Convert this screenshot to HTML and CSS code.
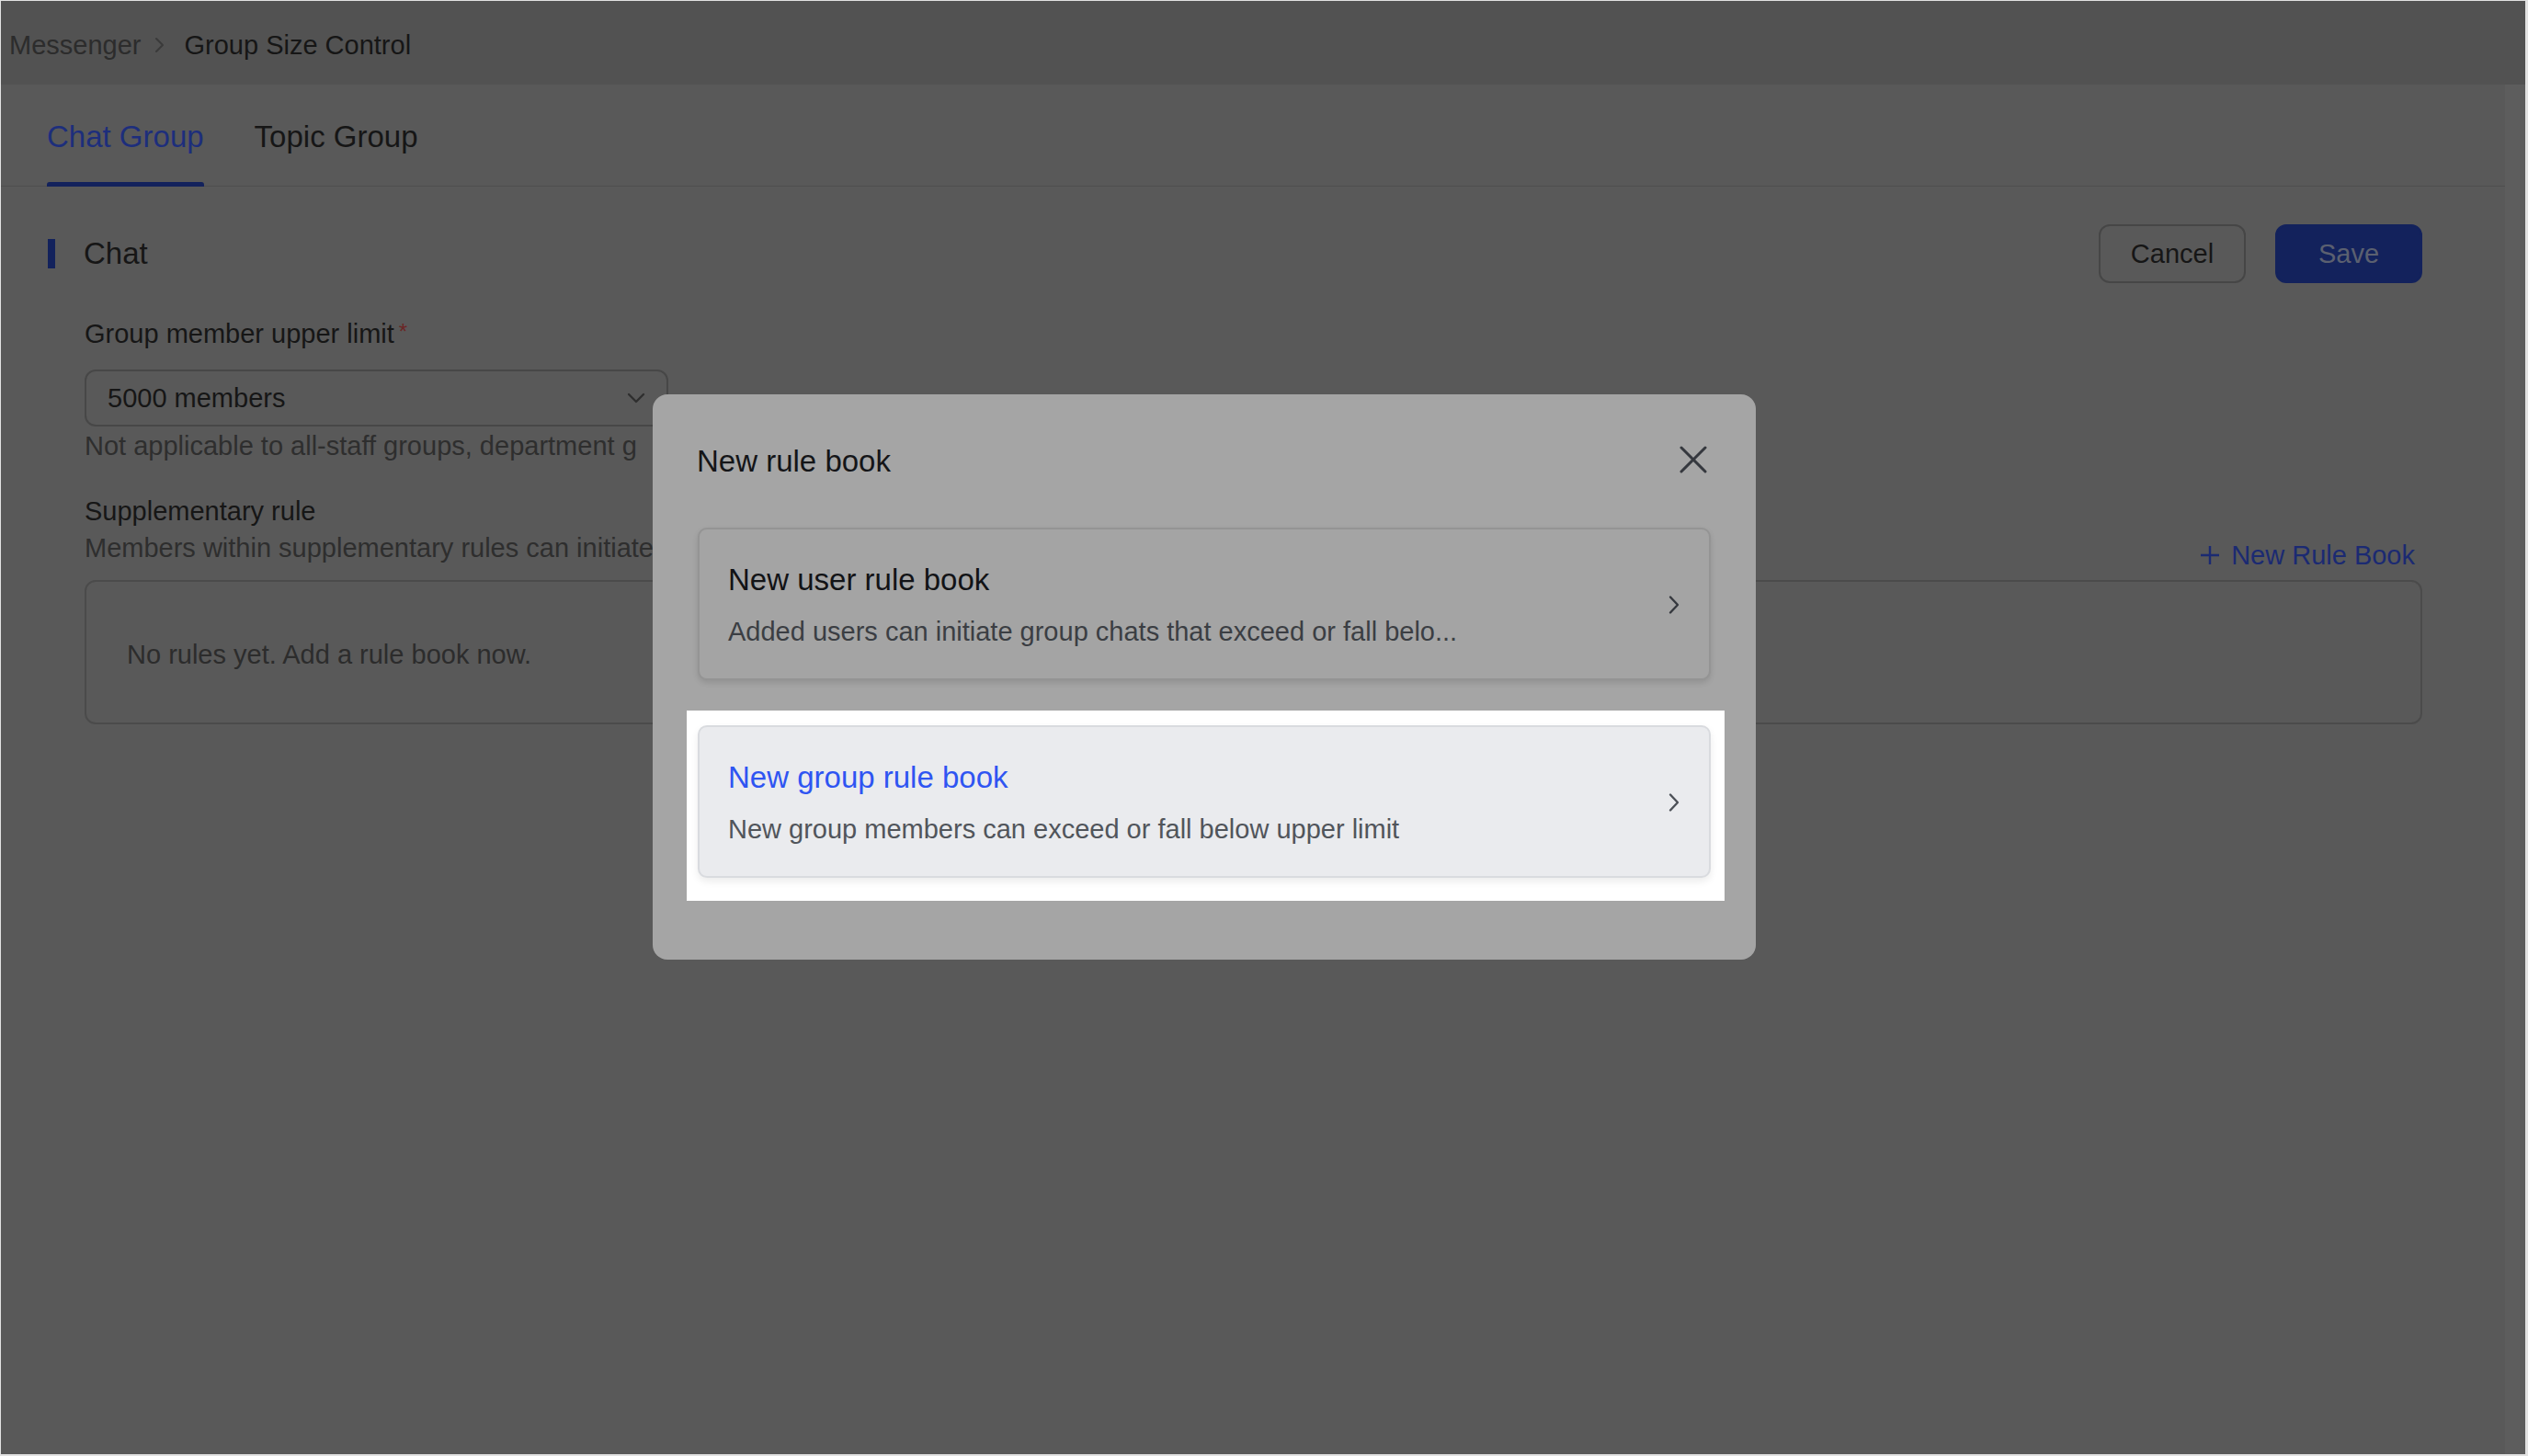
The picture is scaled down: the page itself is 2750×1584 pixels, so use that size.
FILE: index.html
```html
<!DOCTYPE html>
<html lang="en">
<head>
<meta charset="utf-8">
<title>Group Size Control</title>
<link rel="stylesheet" href="styles.css">
</head>
<body>
<div class="frame">
  <header class="crumbs">
    <span class="crumb">Messenger</span>
    <svg class="crumb-sep" width="14" height="20" viewBox="0 0 14 20"><path d="M4 3l7 7-7 7" fill="none" stroke="currentColor" stroke-width="2" stroke-linecap="round" stroke-linejoin="round"/></svg>
    <span class="crumb current">Group Size Control</span>
  </header>
  <div class="workspace">
    <main class="main">
      <nav class="tabs">
        <div class="tab active">Chat Group</div>
        <div class="tab">Topic Group</div>
      </nav>
      <section class="section">
        <div class="section-head">
          <h2 class="section-title">Chat</h2>
          <div class="actions">
            <button class="btn">Cancel</button>
            <button class="btn primary">Save</button>
          </div>
        </div>
        <div class="form">
          <div class="label">Group member upper limit<span class="req">*</span></div>
          <div class="select">
            <span>5000 members</span>
            <svg class="select-arrow" width="20" height="12" viewBox="0 0 20 12"><path d="M2 2l8 8 8-8" fill="none" stroke="currentColor" stroke-width="2.4" stroke-linecap="round" stroke-linejoin="round"/></svg>
          </div>
          <div class="help">Not applicable to all-staff groups, department g</div>
          <div class="rule-head">
            <div class="rule-text">
              <div class="label2">Supplementary rule</div>
              <div class="desc">Members within supplementary rules can initiate</div>
            </div>
            <a class="link"><svg width="22" height="22" viewBox="0 0 22 22"><path d="M11 1v20M1 11h20" fill="none" stroke="currentColor" stroke-width="2.4"/></svg><span>New Rule Book</span></a>
          </div>
          <div class="rules-box">No rules yet. Add a rule book now.</div>
        </div>
      </section>
    </main>
    <div class="scrollbar"></div>
  </div>
</div>

<div class="modal">
  <div class="modal-head">
    <div class="modal-title">New rule book</div>
    <svg class="close" width="32" height="32" viewBox="0 0 32 32"><path d="M3 3l26 26M29 3L3 29" fill="none" stroke="currentColor" stroke-width="3" stroke-linecap="round"/></svg>
  </div>
  <div class="option">
    <div class="option-text">
      <div class="option-title">New user rule book</div>
      <div class="option-desc">Added users can initiate group chats that exceed or fall belo...</div>
    </div>
    <svg class="option-arrow" width="14" height="24" viewBox="0 0 14 24"><path d="M3 3.5l8 8.5-8 8.5" fill="none" stroke="currentColor" stroke-width="2.4" stroke-linecap="round" stroke-linejoin="round"/></svg>
  </div>
  <div class="spot">
    <div class="option hover">
      <div class="option-text">
        <div class="option-title">New group rule book</div>
        <div class="option-desc">New group members can exceed or fall below upper limit</div>
      </div>
      <svg class="option-arrow" width="14" height="24" viewBox="0 0 14 24"><path d="M3 3.5l8 8.5-8 8.5" fill="none" stroke="currentColor" stroke-width="2.4" stroke-linecap="round" stroke-linejoin="round"/></svg>
    </div>
  </div>
</div>
</body>
</html>
```

FILE: styles.css
```css
* { box-sizing: border-box; }

html, body {
  margin: 0;
  padding: 0;
}

body {
  width: 2750px;
  height: 1584px;
  position: relative;
  overflow: hidden;
  font-family: "Liberation Sans", Arial, sans-serif;
  font-size: 29px;
  line-height: 40px;
  color: #161616;
  background: #595959;
}

.frame {
  width: 2750px;
  height: 1584px;
  border-style: solid;
  border-color: #e2e2e2;
  border-width: 1px 3px 2px 1px;
  display: flex;
  flex-direction: column;
}

/* breadcrumb */
.crumbs {
  height: 91px;
  flex: none;
  padding: 4px 0 0 9px;
  display: flex;
  align-items: center;
  background: #525252;
}

.crumb { color: #2c2c2c; }
.crumb.current { color: #161616; }

.crumb-sep {
  color: #3a3a3a;
  margin: 0 20px 0 13px;
}

.workspace {
  flex: 1;
  display: flex;
  background: #595959;
}

.main {
  flex: 1;
  display: flex;
  flex-direction: column;
}

.scrollbar {
  width: 22px;
  flex: none;
  background: #5d5d5d;
}

/* tabs */
.tabs {
  height: 111px;
  flex: none;
  display: flex;
  gap: 55px;
  padding-left: 50px;
  border-bottom: 1px solid #4e4e4e;
}

.tab {
  position: relative;
  font-size: 33px;
  line-height: 44px;
  padding-top: 35px;
  color: #161616;
}

.tab.active { color: #1d2e7c; }

.tab.active::after {
  content: "";
  position: absolute;
  left: 0;
  right: 0;
  bottom: -1px;
  height: 5px;
  border-radius: 3px 3px 0 0;
  background: #13225c;
}

/* section */
.section {
  padding: 0 90px 0 51px;
}

.section-head {
  margin-top: 41px;
  height: 64px;
  display: flex;
  align-items: center;
  justify-content: space-between;
}

.section-title {
  margin: 0;
  display: flex;
  align-items: center;
  font-size: 33px;
  line-height: 44px;
  font-weight: normal;
  color: #161616;
}

.section-title::before {
  content: "";
  width: 8px;
  height: 32px;
  margin-right: 31px;
  background: #13225c;
}

.actions {
  display: flex;
  gap: 32px;
}

.btn {
  width: 160px;
  height: 64px;
  border-radius: 12px;
  border: 2px solid #464646;
  background: transparent;
  font-family: inherit;
  font-size: 29px;
  color: #161616;
  padding: 0;
}

.btn.primary {
  border-color: #13225c;
  background: #13225c;
  color: #5b6070;
}

/* form */
.form {
  padding-left: 40px;
}

.label {
  margin-top: 33px;
  color: #161616;
}

.req {
  color: #6b2626;
  margin-left: 5px;
  font-size: 24px;
  vertical-align: 4px;
}

.select {
  margin-top: 19px;
  width: 635px;
  height: 62px;
  border: 2px solid #474747;
  border-radius: 12px;
  padding: 0 23px 0 23px;
  display: flex;
  align-items: center;
  justify-content: space-between;
  color: #161616;
}

.select-arrow { color: #2f2f2f; }

.help {
  margin-top: 3px;
  line-height: 36px;
  color: #2e2e2e;
  white-space: nowrap;
}

.rule-head {
  margin-top: 33px;
  display: flex;
  align-items: flex-end;
  justify-content: space-between;
}

.label2 { color: #161616; }

.desc {
  color: #2e2e2e;
  white-space: nowrap;
}

.link {
  display: flex;
  align-items: center;
  gap: 12px;
  margin: 0 8px -8px 0;
  color: #1b2a72;
}

.rules-box {
  margin-top: 15px;
  height: 157px;
  border: 2px solid #4b4b4b;
  border-radius: 12px;
  padding: 4px 0 0 44px;
  display: flex;
  align-items: center;
  color: #2c2c2c;
}

/* modal */
.modal {
  position: absolute;
  left: 710px;
  top: 429px;
  width: 1200px;
  height: 615px;
  padding: 51px 49px 0 49px;
  border-radius: 16px;
  background: #a5a5a5;
}

.modal-head {
  height: 44px;
  display: flex;
  align-items: center;
  justify-content: space-between;
}

.modal-title {
  margin-left: -1px;
  font-size: 33px;
  line-height: 44px;
  color: #141518;
}

.close {
  color: #35383e;
  margin: 0 3px 4px 0;
}

.option {
  margin-top: 50px;
  height: 166px;
  border: 2px solid #949494;
  border-radius: 10px;
  background: #a4a4a4;
  box-shadow: 0 3px 6px rgba(0, 0, 0, 0.12);
  padding: 2px 31px 0 31px;
  display: flex;
  align-items: center;
  justify-content: space-between;
}

.option-text {
  display: flex;
  flex-direction: column;
}

.option-title {
  font-size: 33px;
  line-height: 44px;
  color: #121316;
}

.option-desc {
  margin-top: 14px;
  color: #3b3e43;
}

.option-arrow { color: #35383e; }

.spot {
  position: relative;
  z-index: 0;
  margin-top: 49px;
}

.spot::before {
  content: "";
  position: absolute;
  top: -16px;
  left: -12px;
  right: -15px;
  bottom: -25px;
  background: #ffffff;
  z-index: -1;
}

.option.hover {
  margin-top: 0;
  background: #eaebee;
  border-color: #d9dbdf;
  box-shadow: 0 4px 8px rgba(0, 0, 0, 0.08);
}

.option.hover .option-title { color: #2f55f2; }
.option.hover .option-desc { color: #51555b; }
.option.hover .option-arrow { color: #4c5057; }
```
